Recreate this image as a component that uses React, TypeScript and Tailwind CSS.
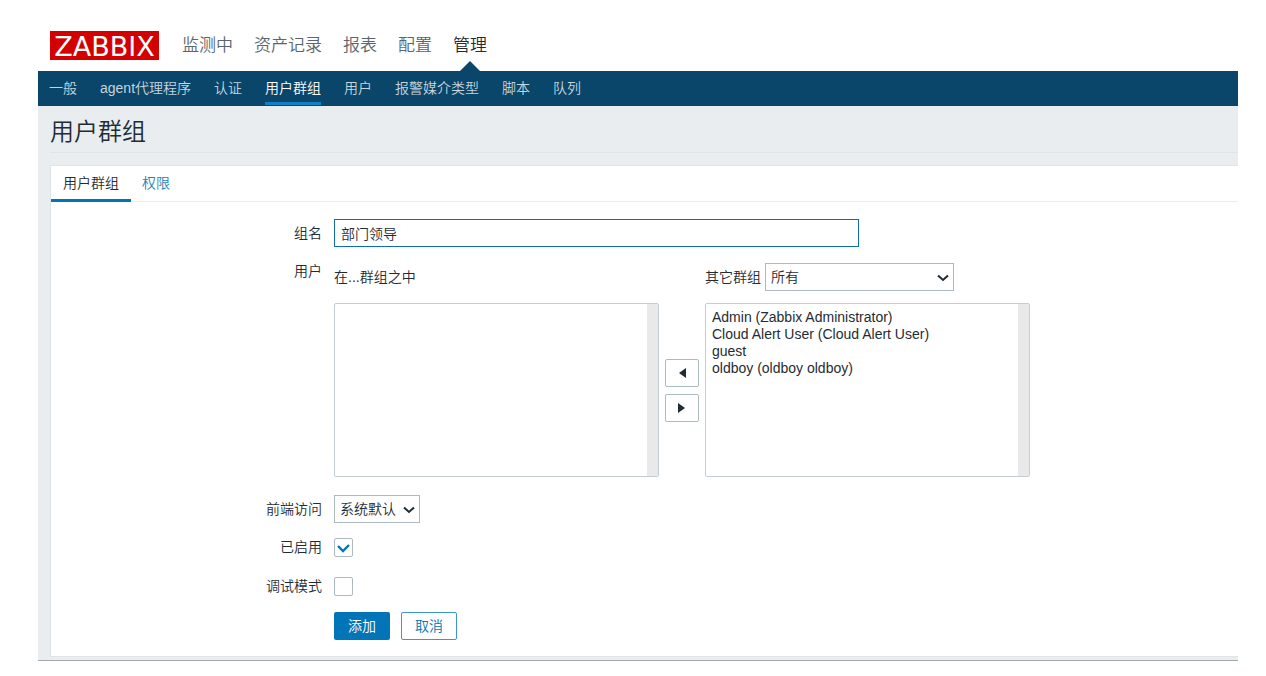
import { useState } from 'react';
import type { ReactNode } from 'react';
import clsx from 'clsx';

const mainMenu = ['监测中', '资产记录', '报表', '配置', '管理'];
const subMenu = ['一般', 'agent代理程序', '认证', '用户群组', '用户', '报警媒介类型', '脚本', '队列'];
const allUsers = [
  'Admin (Zabbix Administrator)',
  'Cloud Alert User (Cloud Alert User)',
  'guest',
  'oldboy (oldboy oldboy)',
];

function Row({ label, htmlFor, className, children }: { label: string; htmlFor: string; className?: string; children: ReactNode }) {
  return (
    <div className={clsx('flex gap-3', className)}>
      <label htmlFor={htmlFor} className="w-[271px] shrink-0 text-right leading-7">
        {label}
      </label>
      <div>{children}</div>
    </div>
  );
}

function Select({ id, option, className }: { id: string; option: string; className: string }) {
  return (
    <span className={clsx('relative block h-7', className)}>
      <select id={id} className="block h-full w-full appearance-none border border-[#acbbc2] bg-white px-[5px]">
        <option>{option}</option>
      </select>
      <svg
        viewBox="0 0 12 8"
        className="pointer-events-none absolute right-[5px] top-[11px] h-2 w-3 fill-none stroke-[#1f2c33] stroke-2"
      >
        <path d="M1 1.5 6 6l5-4.5" />
      </svg>
    </span>
  );
}

function ListBox({ id, label, options }: { id: string; label: string; options: string[] }) {
  return (
    <div className="flex h-[174px] w-[325px] overflow-hidden rounded-xs border border-[#c3ced3]">
      <select id={id} multiple aria-label={label} className="min-w-0 flex-1 overflow-hidden px-1 py-[5px] outline-none">
        {options.map((option) => (
          <option key={option} className="min-h-0 px-0.5 pb-px pt-0">
            {option}
          </option>
        ))}
      </select>
      <div className="w-[11px] bg-[#e9e9e9]" />
    </div>
  );
}

function MoveButton({ label, path }: { label: string; path: string }) {
  return (
    <button
      type="button"
      aria-label={label}
      className="flex h-7 w-[34px] items-center justify-center rounded-xs border border-[#acbbc2] bg-white"
    >
      <svg viewBox="0 0 8 10" className="h-[10px] w-2 fill-[#1f2c33]">
        <path d={path} />
      </svg>
    </button>
  );
}

function CheckBox({ id, defaultChecked }: { id: string; defaultChecked?: boolean }) {
  const [checked, setChecked] = useState(!!defaultChecked);

  return (
    <span className="relative mt-[5px] block h-[19px] w-[19px]">
      <input
        id={id}
        type="checkbox"
        checked={checked}
        onChange={(e) => setChecked(e.target.checked)}
        className="block h-full w-full appearance-none rounded-xs border border-[#acbbc2] bg-white"
      />
      {checked && (
        <svg viewBox="0 0 19 19" className="pointer-events-none absolute inset-0 fill-none stroke-[#0275b8] stroke-[2.4]">
          <path d="M4 8 9 13 15 7" />
        </svg>
      )}
    </span>
  );
}

export default function App() {
  const [groupName, setGroupName] = useState('部门领导');

  return (
    <div className="bg-white pl-[38px] pr-7 font-['Liberation_Sans','Noto_Sans_CJK_SC',sans-serif] text-sm font-[350] text-[#1f2c33]">
      <header className="flex items-center gap-[23px] pb-[11px] pl-3 pt-[31px]">
        <a
          href="#"
          className="flex h-[29px] w-[109px] items-center justify-center bg-[#d40000] pt-px font-['DejaVu_Sans',sans-serif] text-[27px] font-normal leading-none text-white"
        >
          ZABBIX
        </a>
        <nav className="flex gap-[21px] text-[17px] leading-[29px]">
          {mainMenu.map((item) => (
            <a key={item} href="#" className={clsx('relative', item === '管理' ? 'text-[#1f2c33]' : 'text-[#5a666d]')}>
              {item}
              {item === '管理' && (
                <svg viewBox="0 0 20 10" className="absolute -bottom-[11px] left-[7px] h-[10px] w-5 fill-[#0a466a]">
                  <path d="M0 10 10 0 20 10Z" />
                </svg>
              )}
            </a>
          ))}
        </nav>
      </header>

      <nav className="flex h-[35px] gap-[23px] bg-[#0a466a] pl-[11px]">
        {subMenu.map((item) => (
          <a
            key={item}
            href="#"
            className={clsx(
              'mb-px border-b-[3px] leading-[34px]',
              item === '用户群组' ? 'border-[#0f81c7] text-white' : 'border-transparent text-[#c6d4dd]'
            )}
          >
            {item}
          </a>
        ))}
      </nav>

      <main className="border-b border-[#a5a8ab] bg-[#e9edf0] pb-[3px] pl-3">
        <h1 className="mb-3 border-b border-[#dfe4e7] pt-1.5 text-2xl font-[350] leading-10">用户群组</h1>

        <form className="border-y border-l border-[#dfe4e7] bg-white" onSubmit={(e) => e.preventDefault()}>
          <div className="flex h-9 border-b border-[#ebeef0]">
            <button type="button" className="-mb-px border-b-[3px] border-[#0275b8] px-3">
              用户群组
            </button>
            <button type="button" className="-mb-px border-b-[3px] border-transparent px-[11px] text-[#1f7fb8]">
              权限
            </button>
          </div>

          <div className="pb-4 pt-[17px]">
            <Row label="组名" htmlFor="name">
              <input
                id="name"
                type="text"
                value={groupName}
                onChange={(e) => setGroupName(e.target.value)}
                className="block h-7 w-[525px] border border-[#0f6ea8] bg-white px-1.5 outline-none"
              />
            </Row>

            <Row label="用户" htmlFor="members" className="mt-[10px]">
              <div className="flex gap-[6px] pt-[6px]">
                <div>
                  <div className="mb-3 leading-7">在...群组之中</div>
                  <ListBox id="members" label="在...群组之中" options={[]} />
                </div>
                <div className="flex flex-col justify-center gap-[7px] pt-[41px]">
                  <MoveButton label="左移" path="M8 0v10L1 5Z" />
                  <MoveButton label="右移" path="M0 0v10l7-5Z" />
                </div>
                <div>
                  <div className="mb-3 flex items-center gap-1">
                    <label htmlFor="other">其它群组</label>
                    <Select id="other" option="所有" className="w-[189px]" />
                  </div>
                  <ListBox id="users" label="用户列表" options={allUsers} />
                </div>
              </div>
            </Row>

            <Row label="前端访问" htmlFor="access" className="mt-[18px]">
              <Select id="access" option="系统默认" className="w-[86px]" />
            </Row>

            <Row label="已启用" htmlFor="enabled" className="mt-[10px]">
              <CheckBox id="enabled" defaultChecked />
            </Row>

            <Row label="调试模式" htmlFor="debug" className="mt-[11px]">
              <CheckBox id="debug" />
            </Row>

            <div className="ml-[283px] mt-3 flex gap-[11px]">
              <button type="submit" className="h-7 w-14 rounded-xs bg-[#0275b8] text-white">
                添加
              </button>
              <button type="button" className="h-7 w-14 rounded-xs border border-[#3d97cc] bg-white text-[#0275b8]">
                取消
              </button>
            </div>
          </div>
        </form>
      </main>
    </div>
  );
}
